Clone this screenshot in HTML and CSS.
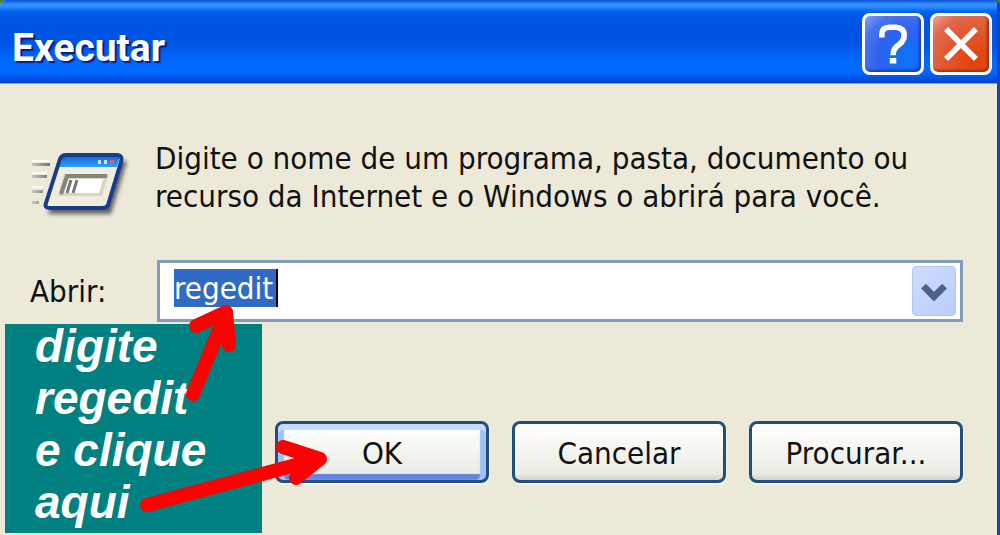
FILE: index.html
```
<!DOCTYPE html>
<html lang="pt-BR">
<head>
    <meta charset="UTF-8">
    <title>Executar</title>
    <link rel="stylesheet" href="styles.css">
</head>
<body>
    <div class="dialog">
        <header class="titlebar">
            <h1>Executar</h1>
            <button type="button" class="title-btn help" aria-label="Ajuda">
                <svg viewBox="0 0 60 60" fill="none" stroke="#fff" stroke-width="6">
                    <path d="M18 23 V20 Q18 12 26 12 H33 Q42 13 42 20 Q42 27 36 31 Q30 35 30 42"/>
                    <path d="M30 45 V51" stroke-width="7"/>
                </svg>
            </button>
            <button type="button" class="title-btn close" aria-label="Fechar">
                <svg viewBox="0 0 60 60" fill="none" stroke="#fff" stroke-width="6">
                    <path d="M14 14 L46 46 M46 14 L14 46"/>
                </svg>
            </button>
        </header>

        <form class="content">
            <div class="intro">
                <svg class="run-icon" viewBox="0 0 100 76">
                    <defs>
                        <linearGradient id="bar" x1="0" y1="0" x2="0" y2="1">
                            <stop offset="0" stop-color="#1a62d8"/>
                            <stop offset="1" stop-color="#2fa0f4"/>
                        </linearGradient>
                        <linearGradient id="speed" x1="0" y1="0" x2="1" y2="0">
                            <stop offset="0" stop-color="#c5c6c4"/>
                            <stop offset="1" stop-color="#6c7478"/>
                        </linearGradient>
                        <filter id="shadow" x="-20%" y="-20%" width="140%" height="150%">
                            <feGaussianBlur stdDeviation="2"/>
                        </filter>
                    </defs>
                    <path d="M38 16 H97 L81 69 H18 Z" fill="#404146" opacity="0.8" filter="url(#shadow)"/>
                    <path d="M36 10 H88 Q93 11 91 17 L78 60 Q77 63 72 63 H20 Q14 63 16 58 L30 14 Q32 10 36 10 Z" fill="#f0ede0"/>
                    <path d="M34 11 H90 L87 22 H28 Z" fill="url(#bar)"/>
                    <path d="M36 10 H88 Q93 11 91 17 L78 60 Q77 63 72 63 H20 Q14 63 16 58 L30 14 Q32 10 36 10 Z" fill="none" stroke="#173c8c" stroke-width="4" stroke-linejoin="round"/>
                    <path d="M34 29 H79 L72 51 H28 Z" fill="#d8d5c5"/>
                    <path d="M31 49 L37 31 H77" fill="none" stroke="#858578" stroke-width="4"/>
                    <path d="M39 34 H73 L69 48 H34 Z" fill="#fff"/>
                    <path d="M37 48 L41 35 M43 48 L47 35" stroke="#777" stroke-width="3"/>
                    <path d="M68 17 H71 M74 17 H77" stroke="#bfe0ff" stroke-width="4"/>
                    <path d="M80 17 H84" stroke="#d4694d" stroke-width="4"/>
                    <path d="M2 18 H20 V21 H2 Z M2 30 H17 V33 H2 Z M2 45 H13 V48 H2 Z M2 56 H9 V59 H2 Z" fill="url(#speed)"/>
                    <path d="M2 16 H20 M2 28 H17 M2 42 H13" stroke="#fafaf4" stroke-width="2"/>
                </svg>
                <p>Digite o nome de um programa, pasta, documento ou recurso da Internet e o Windows o abrirá para você.</p>
            </div>

            <div class="field">
                <label for="command">Abrir:</label>
                <div class="combo">
                    <input type="text" id="command" value="regedit" autocomplete="off" spellcheck="false">
                    <button type="button" class="drop" aria-label="Mostrar lista">
                        <svg viewBox="0 0 44 50" fill="none" stroke="#4d6185" stroke-width="7">
                            <path d="M11 20 L22 31 L33 20"/>
                        </svg>
                    </button>
                </div>
            </div>

            <div class="actions">
                <button type="button" class="btn default">OK</button>
                <button type="button" class="btn">Cancelar</button>
                <button type="button" class="btn">Procurar...</button>
            </div>
        </form>

        <div class="note">
            <span>digite</span>
            <span>regedit</span>
            <span>e clique</span>
            <span>aqui</span>
        </div>

        <svg class="arrows" width="340" height="535" viewBox="0 0 340 535" fill="none" stroke="#f00" stroke-width="14" stroke-linecap="round" stroke-linejoin="round">
            <path d="M193 394 L226 313 M196 326 L226 312 L229 345"/>
            <path d="M147 505 L318 459 M283 447 L320 459 L296 478"/>
        </svg>
    </div>
</body>
</html>
```

FILE: styles.css
```
* { box-sizing: border-box; }
body { margin: 0; background-color: #56772f; font-family: "DejaVu Sans Condensed", Tahoma, sans-serif; font-size: 31px; color: #111; }
button, input { font: inherit; color: inherit; padding: 0; }
button svg { display: block; width: 100%; height: 100%; }

.dialog { position: relative; display: flex; flex-direction: column; min-height: 100vh; overflow: hidden; background-color: #ece9d8; border-right: 3px solid #1242c8; border-radius: 6px 6px 0 0; }

/* title bar */
.titlebar { display: flex; align-items: center; gap: 6px; height: 84px; margin-right: -3px; padding: 4px 8px 0 12px; border-bottom: 1px solid #7f9fe0; background: linear-gradient(#0a50d8 0, #3190ff 4px, #2e8cff 7px, #0464f0 11px, #0055e5 18px, #0054e3 44px, #0068ff 60px, #006aff 72px, #0050e0 79px, #0040c4 83px); }
.titlebar h1 { flex: 1; margin: 0; padding-top: 8px; font-family: Roboto, sans-serif; font-size: 39px; line-height: 44px; font-weight: bold; color: #fff; text-shadow: 2px 2px 1px #0a1e87; }
.title-btn { width: 62px; height: 62px; border: 3px solid #fff; border-radius: 8px; }
.help { background: radial-gradient(circle at 75% 75%, #0a74fb 0, #2f62ee 50%, #4a74ee 75%, #85a2f8 100%); box-shadow: inset -2px -2px 3px #1c3fae; }
.close { background: radial-gradient(circle at 75% 80%, #e24305 0, #e2552c 45%, #e0694e 75%, #f0a590 100%); box-shadow: inset -2px -2px 3px #a52e0c; }

/* dialog body */
.content { display: flex; flex-direction: column; padding: 55px 34px 52px 30px; }
.intro { display: flex; gap: 25px; }
.intro p { flex: 1; max-width: 780px; margin: 0; line-height: 38px; }
.run-icon { flex: none; width: 100px; height: 76px; margin-top: 6px; }

.field { display: flex; align-items: center; margin-top: 39px; }
.field label { width: 127px; }
.combo { flex: 1; display: flex; align-items: center; justify-content: space-between; height: 62px; padding: 0 4px 0 14px; background-color: #fff; border: 3px solid #7f9db9; }
.combo input { width: 104px; height: 38px; margin-bottom: 6px; border: 0; border-right: 2px solid #000; border-radius: 0; outline: 0; background-color: #316ac5; color: #fff; }
.drop { width: 44px; height: 50px; border: 1px solid #b5c6f2; border-radius: 4px; background: linear-gradient(135deg, #d0dcfe, #b9cdfb); }

.actions { display: flex; justify-content: flex-end; gap: 23px; margin-top: 99px; }
.btn { width: 214px; height: 62px; padding-top: 2px; border: 3px solid #1f4f7d; border-radius: 8px; background: linear-gradient(#fff, #f2f2ec 60%, #ecebe6 88%, #d8d2c6); box-shadow: 1px 2px 1px #f6f4ec; }
.default { box-shadow: inset 0 6px 1px #c4dbfb, inset 6px 0 1px #a3c0f5, inset -6px 0 1px #a3c0f5, inset 0 -6px 1px #6583e0, 1px 2px 1px #f6f4ec; }

/* instructions laid over the dialog */
.note { position: absolute; left: 5px; top: 324px; display: flex; flex-direction: column; gap: 8px; width: 257px; height: 209px; padding-left: 30px; background-color: #008080; color: #fff; font: italic bold 46px/44px "Liberation Sans", Arial, sans-serif; }
.arrows { position: absolute; left: 0; top: 0; pointer-events: none; }
```
